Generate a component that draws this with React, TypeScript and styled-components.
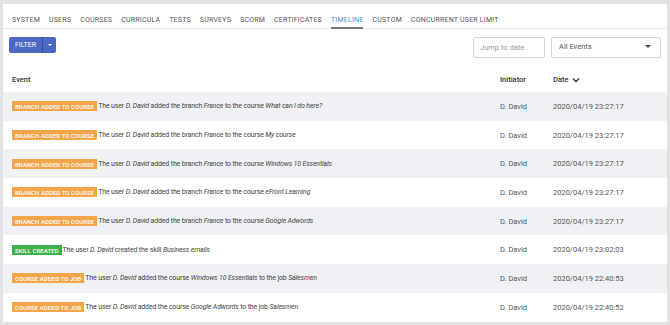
import React from 'react';
import styled, { createGlobalStyle } from 'styled-components';

const GlobalStyle = createGlobalStyle`
  html, body {
    margin: 0;
    padding: 0;
    background: #e3e3e3;
    font-family: Roboto, 'Liberation Sans', sans-serif;
  }
  * { box-sizing: border-box; }
`;

const Page = styled.div`
  width: 670px;
  height: 325px;
  padding: 4px 3px 3px 3px;
  overflow: hidden;
`;

const Panel = styled.div`
  background: #fff;
  height: 100%;
  overflow: hidden;
`;

const Tabs = styled.nav`
  display: flex;
  gap: 9px;
  padding: 0 9px;
  height: 25px;
  align-items: flex-end;
  border-bottom: 1px solid #ececec;
`;

const Tab = styled.a<{ $active?: boolean }>`
  font-size: 7px;
  letter-spacing: 0.03em;
  color: ${p => (p.$active ? '#4a8fc9' : '#555')};
  padding-bottom: 3px;
  border-bottom: 2px solid ${p => (p.$active ? '#777' : 'transparent')};
  margin-bottom: -1px;
  cursor: pointer;
`;

const Toolbar = styled.div`
  display: flex;
  align-items: flex-start;
  padding: 8px 6px 0 6px;
  height: 29px;
`;

const FilterGroup = styled.div`
  display: flex;
  height: 16px;
  border-radius: 2px;
  overflow: hidden;
  background: #4a68c4;
`;

const FilterButton = styled.button`
  border: 0;
  background: transparent;
  color: #fff;
  font-family: inherit;
  font-size: 7px;
  padding: 0 6px;
  height: 100%;
`;

const Caret = styled.button`
  border: 0;
  border-left: 1px solid #3552a8;
  background: transparent;
  width: 14px;
  height: 100%;
  display: flex;
  align-items: center;
  justify-content: center;
  &::after {
    content: '';
    border-left: 2.5px solid transparent;
    border-right: 2.5px solid transparent;
    border-top: 2.5px solid #fff;
  }
`;

const Spacer = styled.div`
  flex: 1;
`;

const DateInput = styled.div`
  width: 72px;
  height: 21px;
  border: 1px solid #d4d4d4;
  border-radius: 2px;
  font-size: 7.5px;
  color: #999;
  display: flex;
  align-items: center;
  padding-left: 6px;
  margin-right: 6px;
`;

const Select = styled.div`
  width: 110px;
  height: 21px;
  border: 1px solid #d4d4d4;
  border-radius: 2px;
  font-size: 7.5px;
  color: #555;
  display: flex;
  align-items: flex-start;
  padding: 4px 9px 0 7px;
  justify-content: space-between;
  &::after {
    content: '';
    margin-top: 3px;
    border-left: 3px solid transparent;
    border-right: 3px solid transparent;
    border-top: 3px solid #444;
  }
`;

const Table = styled.div`
  display: flex;
  flex-direction: column;
`;

const Row = styled.div<{ $striped?: boolean; $head?: boolean }>`
  display: grid;
  grid-template-columns: 1fr 53px 114px;
  align-items: center;
  flex: 0 0 ${p => (p.$head ? '34px' : '28.7px')};
  padding-left: 9px;
  background: ${p => (p.$striped ? '#f0f1f5' : '#fff')};
  font-size: 7.5px;
  color: #444;
  white-space: nowrap;
`;

const HeadCell = styled.div`
  font-weight: 500;
  color: #333;
  display: flex;
  align-items: center;
  gap: 4px;
  padding-top: 9px;
`;

const Chevron = () => (
  <svg width="8" height="6" viewBox="0 0 8 6">
    <path d="M1 1.5 L4 4.5 L7 1.5" fill="none" stroke="#333" strokeWidth="1.3" />
  </svg>
);

const EventCell = styled.div`
  display: flex;
  align-items: center;
  gap: 1px;
  color: #444;
  font-size: 7px;
`;

const EventText = styled.span`
  letter-spacing: -0.15px;
`;

const Badge = styled.span<{ $color: string }>`
  background: ${p => p.$color};
  color: #fff;
  font-size: 6px;
  font-weight: 500;
  text-transform: uppercase;
  padding: 2px 3px 1px;
  line-height: 7px;
  letter-spacing: 0.01em;
`;

const Cell = styled.div`
  color: #555;
`;

type Event = {
  badge: string;
  color: string;
  parts: (string | { i: string })[];
  date: string;
};

const ORANGE = '#f2a54b';
const GREEN = '#3fb04a';

const branch = (course: string): Event => ({
  badge: 'Branch added to course',
  color: ORANGE,
  parts: ['The user ', { i: 'D. David' }, ' added the branch ', { i: 'France' }, ' to the course ', { i: course }],
  date: '2020/04/19 23:27:17',
});

const events: Event[] = [
  branch('What can I do here?'),
  branch('My course'),
  branch('Windows 10 Essentials'),
  branch('eFront Learning'),
  branch('Google Adwords'),
  {
    badge: 'Skill created',
    color: GREEN,
    parts: ['The user ', { i: 'D. David' }, ' created the skill ', { i: 'Business emails' }],
    date: '2020/04/19 23:02:03',
  },
  {
    badge: 'Course added to job',
    color: ORANGE,
    parts: ['The user ', { i: 'D. David' }, ' added the course ', { i: 'Windows 10 Essentials' }, ' to the job ', { i: 'Salesmen' }],
    date: '2020/04/19 22:40:53',
  },
  {
    badge: 'Course added to job',
    color: ORANGE,
    parts: ['The user ', { i: 'D. David' }, ' added the course ', { i: 'Google Adwords' }, ' to the job ', { i: 'Salesmen' }],
    date: '2020/04/19 22:40:52',
  },
];

const tabs = ['System', 'Users', 'Courses', 'Curricula', 'Tests', 'Surveys', 'SCORM', 'Certificates', 'Timeline', 'Custom', 'Concurrent user limit'];

const App = () => {
  return (
    <Page>
      <GlobalStyle />
      <Panel>
        <Tabs>
          {tabs.map(t => (
            <Tab key={t} $active={t === 'Timeline'}>{t.toUpperCase()}</Tab>
          ))}
        </Tabs>
        <Toolbar>
          <FilterGroup>
            <FilterButton>FILTER</FilterButton>
            <Caret />
          </FilterGroup>
          <Spacer />
          <DateInput>Jump to date</DateInput>
          <Select>All Events</Select>
        </Toolbar>
        <Table>
          <Row $head>
            <HeadCell>Event</HeadCell>
            <HeadCell>Initiator</HeadCell>
            <HeadCell>Date <Chevron /></HeadCell>
          </Row>
          {events.map((e, idx) => (
            <Row key={idx} $striped={idx % 2 === 0}>
              <EventCell>
                <Badge $color={e.color}>{e.badge}</Badge>
                <EventText>
                  {e.parts.map((p, k) => (typeof p === 'string' ? p : <i key={k}>{p.i}</i>))}
                </EventText>
              </EventCell>
              <Cell>D. David</Cell>
              <Cell>{e.date}</Cell>
            </Row>
          ))}
        </Table>
      </Panel>
    </Page>
  );
};

export default App;
